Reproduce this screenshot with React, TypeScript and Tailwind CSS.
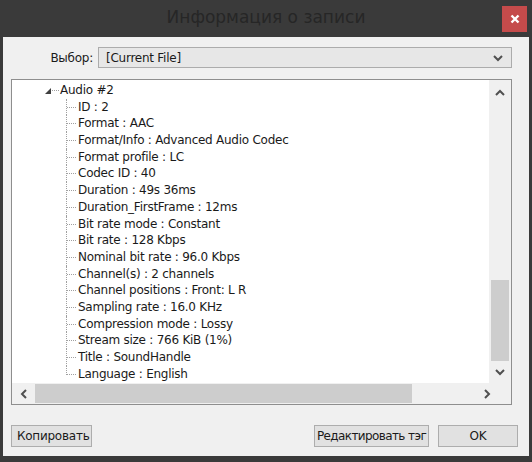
import React from 'react'

const rows = [
  'ID : 2',
  'Format : AAC',
  'Format/Info : Advanced Audio Codec',
  'Format profile : LC',
  'Codec ID : 40',
  'Duration : 49s 36ms',
  'Duration_FirstFrame : 12ms',
  'Bit rate mode : Constant',
  'Bit rate : 128 Kbps',
  'Nominal bit rate : 96.0 Kbps',
  'Channel(s) : 2 channels',
  'Channel positions : Front: L R',
  'Sampling rate : 16.0 KHz',
  'Compression mode : Lossy',
  'Stream size : 766 KiB (1%)',
  'Title : SoundHandle',
  'Language : English',
]

const Chevron = ({ dir }: { dir: 'up' | 'down' | 'left' | 'right' }) => {
  const d = {
    up: 'M1 6 L5 2 L9 6',
    down: 'M1 2 L5 6 L9 2',
    left: 'M6 1 L2 5 L6 9',
    right: 'M2 1 L6 5 L2 9',
  }[dir]
  const vertical = dir === 'up' || dir === 'down'
  return (
    <svg
      width={vertical ? 10 : 8}
      height={vertical ? 8 : 10}
      viewBox={vertical ? '0 0 10 8' : '0 0 8 10'}
    >
      <path d={d} fill="none" stroke="#505050" strokeWidth="2" />
    </svg>
  )
}

const App = () => {
  return (
    <div
      className="w-[532px] h-[462px] bg-[#3a3a3a] flex flex-col text-[#1a1a1a]"
      style={{ fontFamily: '"DejaVu Sans", Verdana, sans-serif' }}
    >
      {/* title bar */}
      <div className="relative h-[37px] flex items-center justify-center shrink-0">
        <span className="text-[17px] text-[#262626] -mt-[1px]">
          Информация о записи
        </span>
        <div className="absolute right-[5px] top-[6px] w-[25px] h-[26px] bg-[#c54b4b] flex items-center justify-center">
          <svg width="10" height="10" viewBox="0 0 10 10">
            <path d="M1.5 1.5 L8.5 8.5 M8.5 1.5 L1.5 8.5" stroke="#fff" strokeWidth="2.4" />
          </svg>
        </div>
      </div>

      {/* client area */}
      <div className="flex-1 mx-[3px] mb-[6px] bg-[#f0f0f0] flex flex-col pt-[10px] pl-[8px] pr-[17px] pb-[9px] text-[12px] tracking-[-0.25px]">
        <div className="flex items-center h-[21px]">
          <span className="w-[87px] text-right pr-[5px]">Выбор:</span>
          <div className="flex-1 h-full border border-[#acacac] bg-[#e7e7e7] flex items-center justify-between pl-[7px] pr-[8px]">
            <span>[Current File]</span>
            <Chevron dir="down" />
          </div>
        </div>

        {/* tree */}
        <div className="mt-[11px] h-[326px] border border-[#8e8e8e] bg-white flex flex-col">
          <div className="flex flex-1 min-h-0">
            <div className="flex-1 overflow-hidden pt-[2px] leading-[16.7px] whitespace-nowrap">
              <div className="flex items-center h-[16.7px] pl-[33px]">
                <svg width="6" height="6" viewBox="0 0 6 6" className="mt-[1px]">
                  <polygon points="6,0 6,6 0,6" fill="#404040" />
                </svg>
                <span className="w-[7px] ml-[1px] border-t border-dotted border-[#a0a0a0]" />
                <span className="ml-[1px]">Audio #2</span>
              </div>
              {rows.map((row, i) => (
                <div key={row} className="flex h-[16.7px] pl-[54px]">
                  <span className="relative w-[12px] shrink-0">
                    <span
                      className={`absolute left-0 top-0 border-l border-dotted border-[#a0a0a0] ${
                        i === rows.length - 1 ? 'h-[9px]' : 'h-full'
                      }`}
                    />
                    <span className="absolute left-[1px] top-[8px] w-[9px] border-t border-dotted border-[#a0a0a0]" />
                  </span>
                  <span>{row}</span>
                </div>
              ))}
            </div>
            {/* vertical scrollbar */}
            <div className="w-[22px] bg-[#f0f0f0] flex flex-col items-center">
              <div className="h-[24px] flex items-center justify-center pt-[2px]">
                <Chevron dir="up" />
              </div>
              <div className="flex-1 w-full px-[1px] flex flex-col">
                <div className="flex-1" />
                <div className="h-[81px] bg-[#cdcdcd] mx-[1px]" />
              </div>
              <div className="h-[22px] flex items-center justify-center">
                <Chevron dir="down" />
              </div>
            </div>
          </div>
          {/* horizontal scrollbar */}
          <div className="h-[21px] bg-[#f0f0f0] flex items-center">
            <div className="w-[23px] flex justify-center">
              <Chevron dir="left" />
            </div>
            <div className="w-[377px] h-[19px] bg-[#cdcdcd]" />
            <div className="flex-1" />
            <div className="w-[20px] flex justify-center mr-[14px]">
              <Chevron dir="right" />
            </div>
          </div>
        </div>

        {/* buttons */}
        <div className="mt-auto flex items-center gap-[9px] h-[22px] whitespace-nowrap">
          <button className="w-[81px] h-[22px] bg-[#e1e1e1] border border-[#adadad] text-left pl-[5px]">
            Копировать
          </button>
          <div className="flex-1" />
          <button className="w-[115px] h-[22px] bg-[#e1e1e1] border border-[#adadad] tracking-[-0.6px]">
            Редактировать тэг
          </button>
          <button className="w-[80px] h-[22px] bg-[#e1e1e1] border border-[#adadad] mr-[-6px]">
            OK
          </button>
        </div>
      </div>
    </div>
  )
}

export default App
